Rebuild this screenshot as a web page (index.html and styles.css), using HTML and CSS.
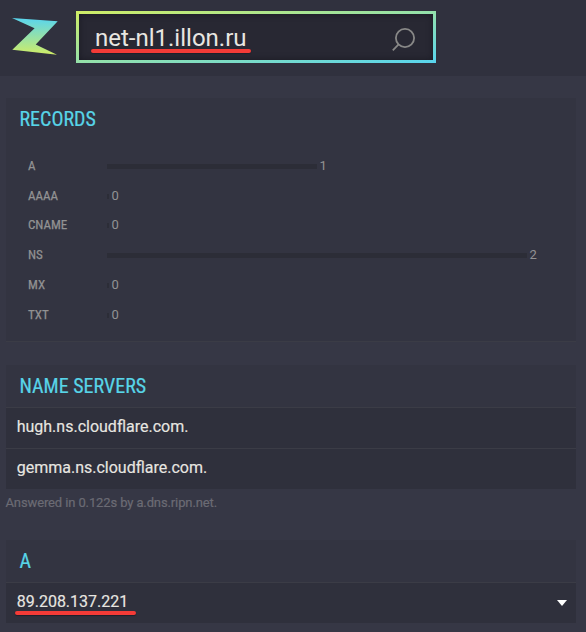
FILE: index.html
```html
<!DOCTYPE html>
<html lang="en">
<head>
<meta charset="utf-8">
<title>DNS lookup</title>
<link rel="stylesheet" href="styles.css">
</head>
<body>
<header class="top">
  <svg class="logo" width="46" height="38" viewBox="0 0 46 38" aria-hidden="true">
    <defs><linearGradient id="g" x1="0" y1="0" x2="0" y2="1"><stop offset="0" stop-color="#58d5ef"/><stop offset="1" stop-color="#d0ed65"/></linearGradient></defs>
    <path d="M0 0 L45.7 3.3 L23.7 26.6 L45 36.8 L.3 31.8 L22.6 10.3Z" fill="url(#g)"/>
  </svg>
  <div class="search">
    <div class="field">
      <span class="query marked">net-nl1.illon.ru</span>
      <svg class="lens" width="26" height="26" viewBox="0 0 26 26" aria-hidden="true"><circle cx="15" cy="11" r="9.1"/><path d="M8.6 17.4 L2.8 23.4"/></svg>
    </div>
  </div>
</header>
<main>
  <section class="card records">
    <h2>RECORDS</h2>
    <dl class="chart">
      <div class="stat"><dt>A</dt><dd><i class="bar" style="width:210px"></i><span>1</span></dd></div>
      <div class="stat"><dt>AAAA</dt><dd><i class="bar" style="width:2px"></i><span>0</span></dd></div>
      <div class="stat"><dt>CNAME</dt><dd><i class="bar" style="width:2px"></i><span>0</span></dd></div>
      <div class="stat"><dt>NS</dt><dd><i class="bar" style="width:420px"></i><span>2</span></dd></div>
      <div class="stat"><dt>MX</dt><dd><i class="bar" style="width:2px"></i><span>0</span></dd></div>
      <div class="stat"><dt>TXT</dt><dd><i class="bar" style="width:2px"></i><span>0</span></dd></div>
    </dl>
  </section>
  <section class="card servers">
    <h2>NAME SERVERS</h2>
    <div class="row">hugh.ns.cloudflare.com.</div>
    <div class="row">gemma.ns.cloudflare.com.</div>
  </section>
  <p class="note">Answered in 0.122s by a.dns.ripn.net.</p>
  <section class="card address">
    <h2>A</h2>
    <div class="row"><span class="ip marked">89.208.137.221</span><svg class="caret" width="10" height="6" viewBox="0 0 10 6" aria-hidden="true"><path d="M0 0H10L5 6Z"/></svg></div>
  </section>
</main>
</body>
</html>
```
FILE: styles.css
```css
* { box-sizing: border-box; }
body { margin: 0; min-height: 632px; background: #363745; color: #e8e6e1; font-family: "Roboto", sans-serif; font-size: 16px; }
.top { display: flex; height: 76px; padding: 11px 12px; background: #30313e; }
.logo { margin: 7px 18px 0 0; }
.search { width: 360px; height: 52px; padding: 3px; background: linear-gradient(to bottom right, #d0ed65, #58d5ef); }
.field { display: flex; align-items: center; justify-content: space-between; height: 46px; padding: 0 17px 0 16px; background: #282833; box-shadow: inset 0 0 6px #191922; }
.marked { position: relative; }
.marked::after { content: ""; position: absolute; height: 4px; border-radius: 2px; background: #f43b37; box-shadow: 0 1px 1px #20202a; }
.query { padding-top: 2px; font-size: 24px; line-height: 44px; }
.query::after { left: -4px; bottom: 7px; width: 160px; }
.lens { margin-top: 5px; fill: none; stroke: #888887; stroke-width: 1.8; }
main { padding: 22px 10px 0 6px; }
.card { background: #333441; }
h2 { margin: 0; padding: 0 14px 0 13.5px; height: 42px; color: #58d5e8; font: 400 20px/42px "Roboto Condensed", "Roboto", sans-serif; font-stretch: 75%; -webkit-text-stroke: .2px; }
.records { height: 244px; border-bottom: 1px solid #3b3c46; }
.chart { margin: 11px 0 0; padding-left: 22px; }
.stat { display: flex; height: 29.8px; align-items: center; color: #929293; }
dt { width: 79px; font: 400 13px/20px "Roboto Condensed", "Roboto", sans-serif; font-stretch: 75%; -webkit-text-stroke: .25px; }
dd { display: flex; align-items: center; margin: 0; gap: 2.5px; font-size: 13px; line-height: 20px; }
.bar { height: 5px; margin-top: 1px; background: #2c2d37; }
.servers { margin-top: 23px; }
.row { display: flex; align-items: center; justify-content: space-between; height: 41px; padding: 0 9px 4px 10.7px; border-top: 1px solid #3b3c46; background: #2f303c; -webkit-text-stroke: .15px; }
.note { margin: 4px 0 0; height: 20px; color: #6b6b74; font-size: 13px; line-height: 20px; letter-spacing: -.12px; text-indent: -.5px; -webkit-text-stroke: .2px; }
.address { margin-top: 27px; }
.ip::after { left: -2px; bottom: -4px; width: 121px; }
.caret { fill: #fff; margin-top: 3px; }
```
